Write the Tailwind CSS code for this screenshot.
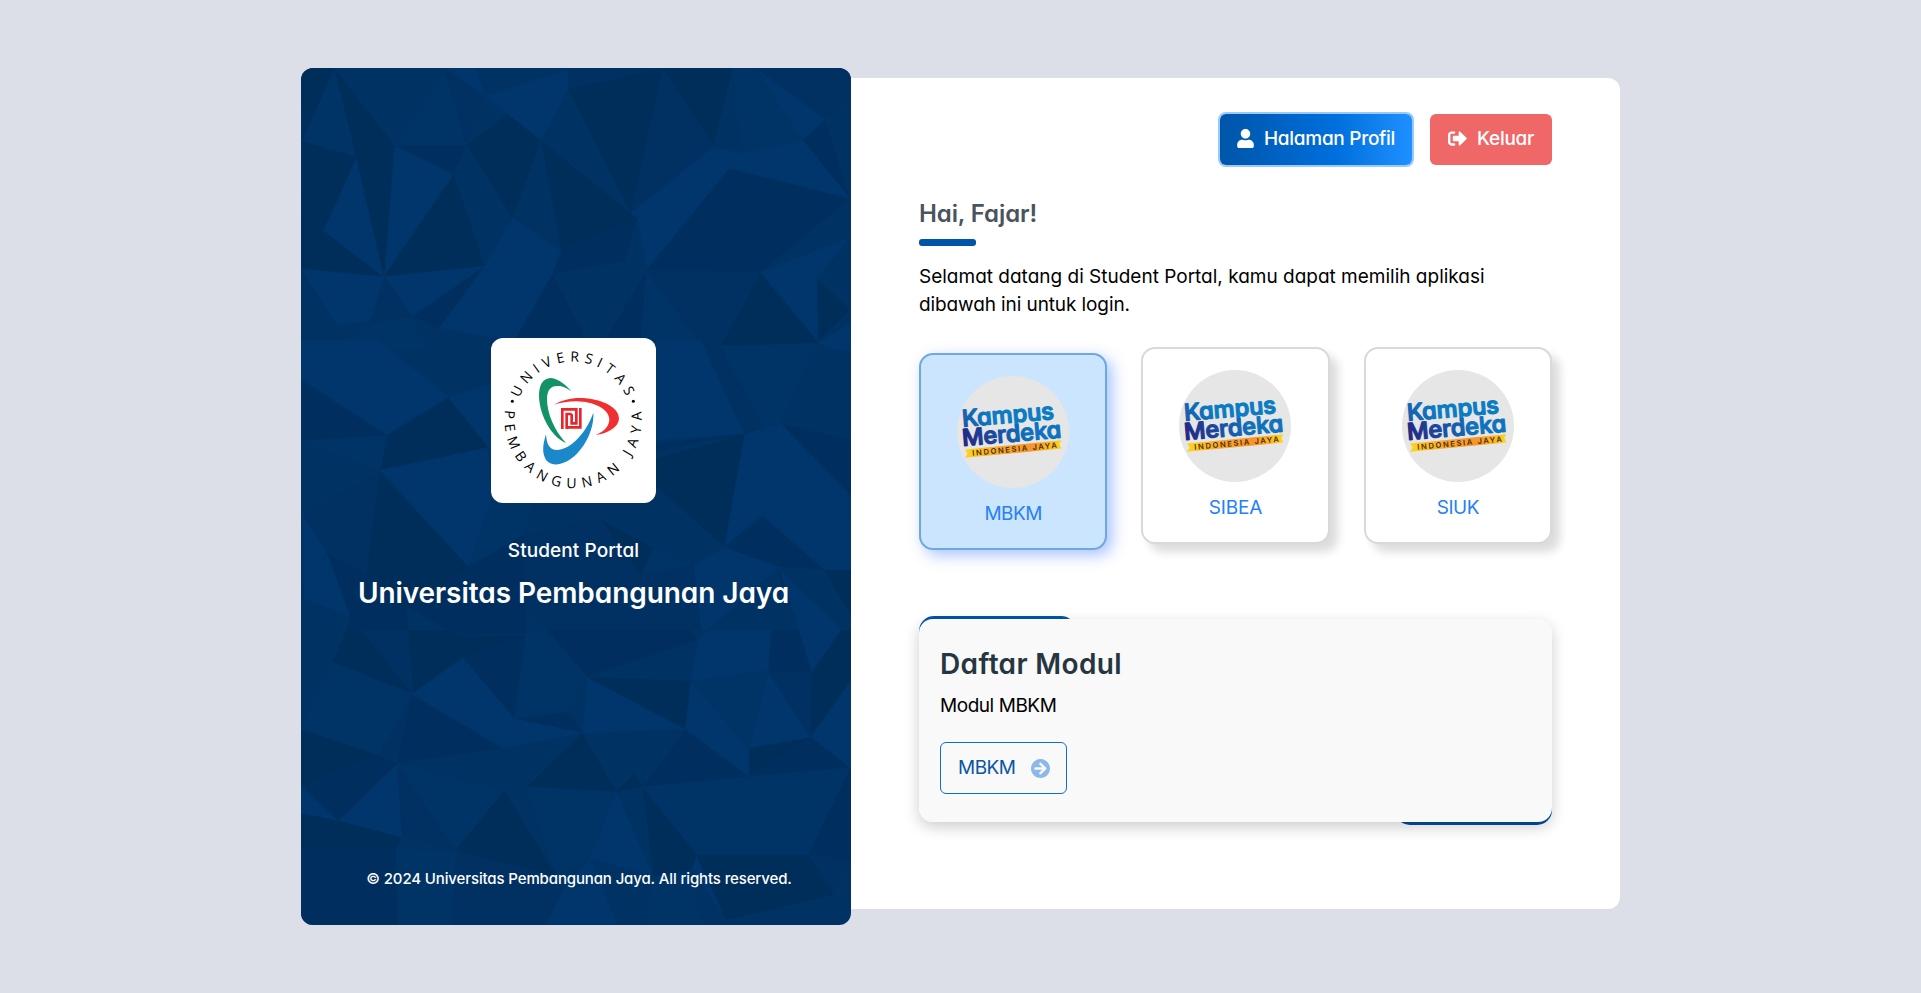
<!DOCTYPE html>
<html lang="id">
<head>
<meta charset="utf-8">
<title>Student Portal</title>
<script src="https://cdn.jsdelivr.net/npm/@tailwindcss/browser@4"></script>
</head>
<body class="min-h-screen bg-[#dddfe8] font-['Inter','Noto_Sans',sans-serif] [font-feature-settings:'cv11'] text-[19px] leading-7 text-black overflow-hidden">
<main class="mx-auto flex w-[1319px] items-start pt-[68px]">
  <aside class="relative flex h-[857px] w-[550px] shrink-0 flex-col items-center overflow-hidden rounded-xl bg-[#003364] text-white">
    <svg class="absolute inset-0 h-[857px] w-[550px]" viewBox="0 0 550 857">
      <g transform="translate(-10.9 -8) scale(.3635 .3333)">
        <path fill="#002e5a" d="M30 24H122L33 243ZM122 24L286 256L259 650L182 290ZM33 243L182 290L92 512L259 650L30 625ZM598 162L690 240L485 256ZM485 256L690 240L612 473ZM690 240L937 460L955 475L746 570ZM765 88L1025 24L937 460ZM1025 24H1218L1165 256ZM450 343L535 618L260 648ZM1295 640L1452 848L1183 860ZM1450 658L1540 748L1452 845Z"/>
        <path fill="#002f5f" d="M288 256H485L450 340ZM1473 180L1410 240L1540 415ZM1208 325L1537 418L1295 637L982 630ZM746 570L955 475L920 605L722 640ZM535 620L335 770L410 805ZM722 645L815 832H615ZM980 635L965 832H870Z"/>
        <path fill="#003162" d="M425 24L537 107L485 256ZM765 24H1025L765 88ZM1025 24L1165 260L937 460ZM1280 24H1543V110L1473 178ZM259 650L335 770L220 785ZM980 630L1295 637L1180 860H1135Z"/>
        <path fill="#003467" d="M425 30L288 256H483ZM122 30L33 243L182 290ZM1218 24H1280L1243 280ZM1280 24L1410 240L1243 280ZM980 635L1135 860L965 832ZM220 790L335 770L375 868H120Z"/>
        <path fill="#00366b" d="M182 298L92 512L256 650ZM288 258L450 343L260 645ZM425 24H510L537 107ZM537 107L765 28V90L598 162ZM598 162L765 90L690 240ZM1280 24L1473 178L1410 240ZM1410 240L1540 415L1208 325L1165 260L1243 280ZM1165 260L1208 325L982 628L955 475L937 460ZM612 475L746 572L722 640L615 845L410 805L535 618ZM260 650L535 618L335 770ZM30 627L259 650L220 785L130 795ZM1295 637L1543 530L1450 655L1452 845ZM1540 790L1452 848L1500 870H1543Z"/>
      </g>
      <g transform="translate(-10.9 272) scale(.3635 .3333)">
        <path fill="#002e5a" d="M435 175L545 322L248 390L270 285ZM245 395L490 680L320 800L210 690ZM850 535L1000 625L965 705ZM1007 440V355L1250 282L1195 620ZM1345 685L1440 870H1400L1345 700ZM1470 690H1543V830Z"/>
        <path fill="#002f5f" d="M30 122L265 285L30 302ZM210 690L320 800L165 830L102 640ZM165 830L320 800L325 870H155ZM490 680L640 585L650 880L460 888L320 800ZM1350 250L1543 300V465ZM1300 530L1470 690L1345 680L1195 622ZM1007 310L1250 282L1007 335Z"/>
        <path fill="#003162" d="M248 395L35 522L102 635L210 700ZM1130 15L1183 18L1305 265L1250 282ZM640 585L850 535L965 705L1110 675L1130 870H705L650 800Z"/>
        <path fill="#003467" d="M30 305L265 288L248 390ZM553 490H670L640 585L490 680ZM1183 18L1450 10L1350 245L1305 265ZM965 705L1110 675L1000 625Z"/>
        <path fill="#00366b" d="M30 115V0H240L435 170L265 285ZM435 170L553 130V322H545ZM35 525L102 635L38 775ZM248 390L545 322L553 480L490 680ZM102 640L165 830L38 775ZM1007 0H1130L1250 282L1007 300ZM1350 250L1540 465L1300 525L1250 282ZM1250 282L1300 525L1195 620ZM1300 525L1543 465V690H1470ZM1195 622L1345 682L1150 870H1130L1110 675ZM1345 685L1520 870H1400Z"/>
      </g>
      <g transform="translate(-10.9 562) scale(.3635 .3333)">
        <path fill="#002e5a" d="M155 0H195L335 190L117 95ZM325 0H430L460 20L648 15L475 82L340 190ZM30 297L243 375L30 465ZM30 550L133 572L307 622L290 660L30 655ZM817 140L1102 153L1087 298ZM1515 0H1543V150L1432 322L1435 128ZM1432 322L1262 440V355ZM805 310L897 485L650 470ZM588 482L735 740L455 662ZM947 428L970 470L897 485ZM970 475L1118 672L1105 720L1000 740ZM1118 675H1425L1495 795L1200 870Z"/>
        <path fill="#002f5f" d="M475 82L648 15L617 265ZM335 195L585 355L295 400ZM243 375L295 400L133 572L30 465ZM30 655L290 660L298 884H30ZM617 265L765 245L805 310ZM705 0H1105L1122 30L817 140ZM1315 122L1325 0H1400L1435 128ZM1432 322L1540 412L1262 440ZM1087 300L1262 440L970 470ZM1543 412V690L1425 672Z"/>
        <path fill="#003162" d="M195 0H325L335 190ZM335 193L243 375L295 400ZM1315 122L1435 128L1432 322ZM295 403L455 660L307 622ZM455 662L735 740L750 790L705 884H445ZM1425 672L1543 690L1495 795Z"/>
        <path fill="#003467" d="M1102 153L1315 122L1262 355ZM650 10L705 0L817 140L765 245L617 265ZM117 97L30 297L243 375L335 193ZM295 403L588 482L455 660ZM650 470L897 485L825 685L735 740ZM970 470L1540 412L1425 672H1118ZM290 660L455 662L445 884H298ZM1000 740L1105 720L1133 884H975Z"/>
        <path fill="#00366b" d="M335 193L475 82L617 265L805 310L585 355ZM30 470L133 572L30 548ZM295 403L133 572L307 622ZM817 143L1087 298L805 310ZM1122 30L1150 0H1325L1315 122L1102 153ZM1087 298L1102 153L1262 355V440ZM1400 0H1515L1435 128ZM1315 125L1432 322L1262 355ZM1543 150V415L1432 322ZM897 485L1000 740L825 685ZM750 780L825 685L900 884H705ZM1105 720L1118 680L1195 860Z"/>
      </g>
    </svg>
    <div class="relative flex h-full w-full flex-col items-center pt-[270px]">
      <div class="mr-[5px] size-[165px] overflow-hidden rounded-xl bg-white">
        <svg class="size-full" viewBox="33 24 495 495">
          <path id="arcTop" fill="none" d="M117.500 204A174 174 0 0 1 440.500 204"/>
          <path id="arcLow" fill="none" d="M75 240A206 206 0 1 0 483 240"/>
          <g font-family="Open Sans" font-size="42" fill="#000">
            <text><textPath href="#arcTop" textLength="408">UNIVERSITAS</textPath></text>
            <text><textPath href="#arcLow" textLength="700">PEMBANGUNAN JAYA</textPath></text>
          </g>
          <circle cx="97" cy="214" r="4.500"/><circle cx="460" cy="214" r="4.500"/>
          <path fill="#139266" d="M275 185C250 155 225 144 212 144C188 145 177 165 177 200C180 260 215 320 258 339C225 305 200 250 201 205C203 175 215 167 235 168C250 168 262 176 275 185Z"/>
          <path fill="#f03030" d="M222 224C245 210 275 203 305 204C375 208 417 235 417 266C416 290 385 310 347 315C370 306 388 290 388 267C385 235 340 215 290 214C265 214 240 218 222 224Z"/>
          <path fill="#1b89c9" d="M340 248C343 290 320 350 275 385C245 408 215 408 200 392C187 375 186 350 198 313C200 345 210 360 230 360C275 358 320 305 340 248Z"/>
          <g fill="none" stroke="#e8262c" stroke-width="8"><path d="M247 297V238H289V280H275V252"/><path d="M260 297V252H275M256 292H301V234"/></g>
        </svg>
      </div>
      <p class="mt-[34px] mr-[5px] font-medium whitespace-nowrap tracking-[0.1px]"><span>Student Portal</span></p>
      <h1 class="mt-[10px] mr-[5px] text-[28px] leading-9 font-semibold whitespace-nowrap tracking-[-0.07px]"><span>Universitas Pembangunan Jaya</span></h1>
      <p class="mt-auto mb-[36px] ml-[6px] text-[15px] leading-5 font-medium whitespace-nowrap tracking-[-0.13px]"><span>© 2024 Universitas Pembangunan Jaya. All rights reserved.</span></p>
    </div>
  </aside>

  <section class="mt-[10px] h-[831px] flex-1 rounded-r-xl bg-white px-[68px] pt-9">
    <div class="flex h-[51px] justify-end gap-[18px] font-medium text-white whitespace-nowrap tracking-[-0.28px]">
      <button class="flex w-[192px] items-center rounded-md bg-linear-to-r from-[#0055a9] via-[#006fdd] via-60% to-[#1e90ff] pb-[2px] pl-[17px] ring-2 ring-[#99caff]">
        <svg class="mr-[10px] h-[19px] w-[17px]" viewBox="0 0 448 512" fill="currentColor"><path d="M224 256c70.700 0 128-57.300 128-128S294.700 0 224 0 96 57.300 96 128s57.300 128 128 128zm89.600 32h-16.700c-22.200 10.200-46.900 16-72.900 16s-50.600-5.800-72.900-16h-16.700C60.200 288 0 348.200 0 422.400V464c0 26.500 21.500 48 48 48h352c26.500 0 48-21.500 48-48v-41.600c0-74.200-60.200-134.400-134.400-134.400z"/></svg>
        <span>Halaman Profil</span>
      </button>
      <button class="flex w-[122px] items-center rounded-md bg-[#ef6767] pb-[2px] pl-[18px]">
        <svg class="mr-[10px] size-[19px]" viewBox="0 0 512 512" fill="currentColor"><path d="M497 273L329 441c-15 15-41 4.500-41-17v-96H152c-13.300 0-24-10.700-24-24v-96c0-13.300 10.700-24 24-24h136V88c0-21.400 25.900-32 41-17l168 168c9.300 9.400 9.300 24.600 0 34zM192 436v-40c0-6.600-5.400-12-12-12H96c-17.700 0-32-14.300-32-32V160c0-17.700 14.300-32 32-32h84c6.600 0 12-5.400 12-12V76c0-6.600-5.400-12-12-12H96c-53 0-96 43-96 96v192c0 53 43 96 96 96h84c6.600 0 12-5.400 12-12z"/></svg>
        <span>Keluar</span>
      </button>
    </div>
    <h2 class="mt-[33px] text-[24px] leading-8 font-semibold tracking-[-0.1px] text-[#4a545e]"><span>Hai, Fajar!</span></h2>
    <div class="mt-[9px] h-[7px] w-[57px] rounded-[3px] bg-[#0055a9]"></div>
    <p class="mt-[17px] whitespace-nowrap"><span>Selamat datang di Student Portal, kamu dapat memilih aplikasi</span><br><span class="tracking-[-0.1px]">dibawah ini untuk login.</span></p>

    <div class="mt-[28px] grid h-[197px] grid-cols-3 gap-[34px] text-[#2680f7] tracking-[-0.5px]">
      <a class="flex h-[197px] translate-y-[6px] flex-col items-center rounded-[14px] border-2 border-[#70a8dd] bg-[#cce5ff] pt-[21px] shadow-[5px_5px_15px_rgba(0,80,255,0.35)]">
        <svg class="size-[112px]" viewBox="51 46 338 338">
          <defs>
            <linearGradient id="inkTop" gradientUnits="userSpaceOnUse" x1="0" y1="40" x2="90" y2="-20"><stop offset="0" stop-color="#1d4f9f"/><stop offset="1" stop-color="#0b7bc4"/></linearGradient>
            <linearGradient id="inkLow" gradientUnits="userSpaceOnUse" x1="0" y1="0" x2="190" y2="-60"><stop offset="0" stop-color="#232482"/><stop offset="1" stop-color="#0f72bd"/></linearGradient>
            <linearGradient id="ribbon" x1="0" x2="1"><stop offset="0" stop-color="#fdd51c"/><stop offset=".35" stop-color="#f9a72b"/><stop offset=".7" stop-color="#f7942a"/><stop offset="1" stop-color="#fdd51c"/></linearGradient>
          </defs>
          <g id="kampus">
            <circle cx="220" cy="215" r="169" fill="#e6e6e6"/>
            <g class="[font-feature-settings:'cv11'] tracking-normal" stroke-width="4" stroke-linejoin="round" font-family="Inter" font-weight="500" font-size="70">
              <text transform="translate(68 199) rotate(-4.8)" fill="url(#inkTop)" stroke="url(#inkTop)" textLength="278" lengthAdjust="spacingAndGlyphs">Kampus</text>
              <text transform="translate(68 257) rotate(-4.8)" fill="url(#inkLow)" stroke="url(#inkLow)" textLength="300" lengthAdjust="spacingAndGlyphs">Merdeka</text>
            </g>
            <path d="M75 268L366 240L360 252L366 265L75 293L83 280Z" fill="url(#ribbon)"/>
            <text class="tracking-normal" transform="translate(98 287) rotate(-5.5)" font-family="Inter" font-weight="600" font-size="23" fill="#4a2c0c" textLength="256">INDONESIA JAYA</text>
          </g>
        </svg>
        <span class="mt-[12px]">MBKM</span>
      </a>
      <a class="flex h-[197px] flex-col items-center rounded-[14px] border-2 border-[#d9d9d9] bg-white pt-[21px] shadow-[8px_8px_10px_rgba(0,0,0,0.14)]">
        <svg class="size-[112px]" viewBox="51 46 338 338"><use href="#kampus"/></svg><span class="mt-[12px] tracking-[-0.2px]">SIBEA</span>
      </a>
      <a class="flex h-[197px] flex-col items-center rounded-[14px] border-2 border-[#d9d9d9] bg-white pt-[21px] shadow-[8px_8px_10px_rgba(0,0,0,0.14)]">
        <svg class="size-[112px]" viewBox="51 46 338 338"><use href="#kampus"/></svg><span class="mt-[12px]">SIUK</span>
      </a>
    </div>

    <div class="relative mt-[75px] h-[203px]">
      <div class="absolute -top-[3px] left-0 h-[40px] w-[157px] rounded-[15px] bg-[#0055a9]"></div>
      <div class="absolute right-0 -bottom-[3px] h-[40px] w-[157px] rounded-[15px] bg-[#004f9e]"></div>
      <div class="absolute inset-0 rounded-[14px] shadow-[0_5px_15px_rgba(0,0,0,0.2)]"></div>
      <div class="relative h-full rounded-[14px] bg-[#f9f9f9] px-[21px] pt-[27px]">
        <h3 class="text-[28px] leading-9 font-semibold tracking-[0.37px] text-[#263640]"><span>Daftar Modul</span></h3>
        <p class="mt-[10px] tracking-[-0.45px]"><span>Modul MBKM</span></p>
        <button class="mt-[22px] flex h-[52px] w-[127px] items-center justify-between rounded-md border border-[#0d6ecd] pr-[16px] pl-[17px] tracking-[-0.5px] text-[#0a55a5]">
          <span>MBKM</span>
          <svg class="size-[19px] text-[#8bb8e8]" viewBox="8 8 496 496" fill="currentColor"><path d="M256 8c137 0 248 111 248 248S393 504 256 504 8 393 8 256 119 8 256 8zm-28.900 143.600l75.500 72.400H120c-13.300 0-24 10.700-24 24v16c0 13.300 10.700 24 24 24h182.600l-75.500 72.400c-9.700 9.300-9.900 24.800-.4 34.300l11 10.900c9.400 9.400 24.600 9.400 33.900 0L404.300 273c9.400-9.400 9.400-24.600 0-33.900L271.600 106.300c-9.400-9.400-24.600-9.400-33.900 0l-11 10.900c-9.500 9.600-9.300 25.100.4 34.400z"/></svg>
        </button>
      </div>
    </div>
  </section>
</main>
</body>
</html>
